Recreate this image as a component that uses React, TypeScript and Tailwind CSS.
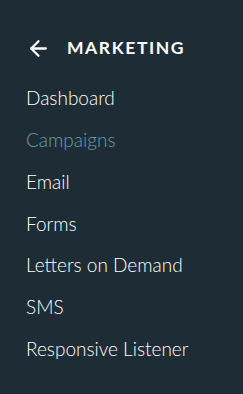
import { ArrowLeft } from 'lucide-react';

const items = [
  { label: 'Dashboard', active: false },
  { label: 'Campaigns', active: true },
  { label: 'Email', active: false },
  { label: 'Forms', active: false },
  { label: 'Letters on Demand', active: false },
  { label: 'SMS', active: false },
  { label: 'Responsive Listener', active: false },
];

export default function App() {
  return (
    <div className="h-[394px] w-[243px] bg-[#1e2d35] font-['Lato',sans-serif]">
      <div className="flex items-center gap-[16px] pl-[26px] pt-[35px]">
        <ArrowLeft className="h-[25px] w-[25px] text-white" strokeWidth={2.2} />
        <h1 className="text-[17.5px] font-bold tracking-[0.09em] text-white">MARKETING</h1>
      </div>
      <nav className="mt-[25px] flex flex-col pl-[26px]">
        {items.map((item) => (
          <a
            key={item.label}
            href="#"
            className={
              'h-[41.8px] text-[19px] font-light leading-[24px] ' +
              (item.active ? 'text-[#6d9ab0]' : 'text-white')
            }
          >
            {item.label}
          </a>
        ))}
      </nav>
    </div>
  );
}
